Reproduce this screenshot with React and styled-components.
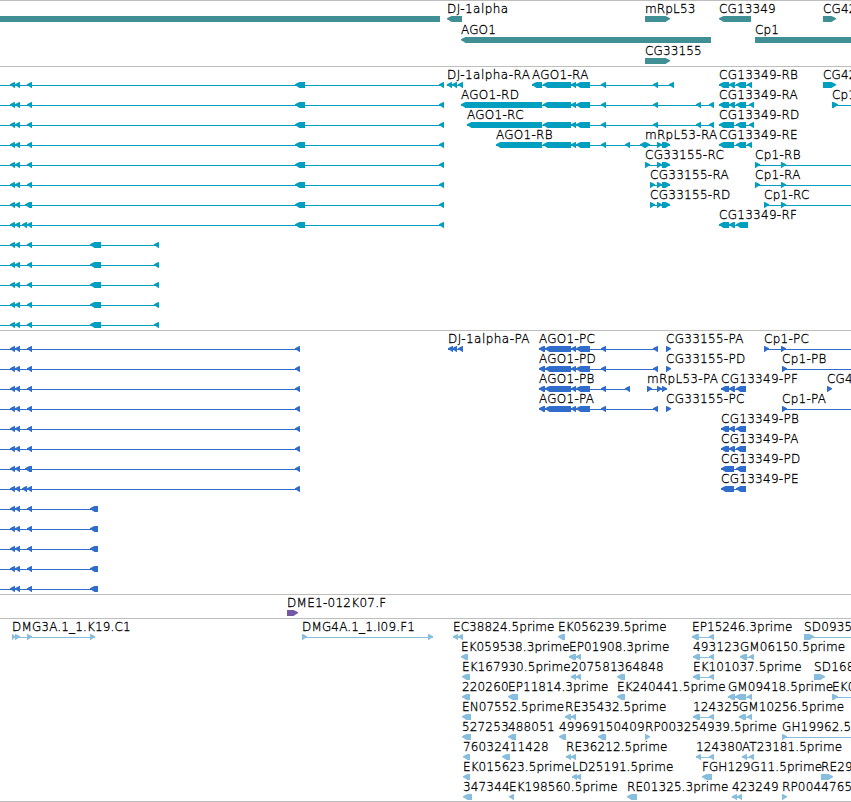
import React from 'react'
import styled, { createGlobalStyle } from 'styled-components'

const WIDTH = 851
const HEAD = 5
const BAR_TOP = 15
const BAR_HEIGHT = 6

// a feature is a label, a strand and its exons as [start, end]
// from / to extend the intron line past the first or last exon

const rev = (label, exons, from) => ({ label, strand: '<', exons, from })
const fwd = (label, exons, to) => ({ label, strand: '>', exons, to })

const longIsoform = (...middle) =>
    rev('', [[10, 15], [15, 20], ...middle, [295, 305], [439, 444]], 0)
const shortIsoform = () =>
    rev('', [[10, 15], [15, 20], [27, 32], [90, 101], [154, 159]], 0)
const longProtein = (...middle) =>
    rev('', [[10, 15], [15, 20], ...middle, [295, 300]], 0)
const shortProtein = () =>
    rev('', [[10, 15], [15, 20], [27, 32], [90, 98]], 0)

const ago = (label, start, ...tail) =>
    rev(label, [[start, 542], [543, 571], [571, 576], [576, 590], [601, 606], ...tail])
const agoProtein = (label, last) =>
    rev(label, [[539, 545], [545, 571], [571, 576], [576, 590], [601, 606], last])

const genes = [
    [
        { label: '', strand: '-', exons: [[0, 440]] },
        rev('DJ-1alpha', [[447, 462]]),
        fwd('mRpL53', [[645, 670]]),
        rev('CG13349', [[719, 751]]),
        fwd('CG42', [[823, 836]]),
    ],
    [rev('AGO1', [[461, 711]]), fwd('Cp1', [[755, 870]])],
    [fwd('CG33155', [[645, 670]])],
]

const transcripts = [
    [
        longIsoform([27, 32]),
        rev('DJ-1alpha-RA', [[447, 452], [452, 457], [458, 463]]),
        ago('AGO1-RA', 532, [653, 658], [669, 674]),
        rev('CG13349-RB', [[719, 729], [729, 735], [736, 746], [747, 752]]),
        fwd('CG42', [[823, 836]]),
    ],
    [
        longIsoform([27, 32]),
        ago('AGO1-RD', 461, [653, 658], [696, 701], [709, 714]),
        rev('CG13349-RA', [[719, 729], [729, 735], [736, 746], [749, 754]]),
        fwd('Cp1', [[832, 838]], WIDTH),
    ],
    [
        longIsoform([27, 32]),
        ago('AGO1-RC', 467, [653, 658], [696, 701], [709, 714]),
        rev('CG13349-RD', [[719, 734], [736, 746], [749, 754]]),
    ],
    [
        longIsoform([27, 32]),
        ago('AGO1-RB', 496, [625, 630], [640, 645]),
        fwd('mRpL53-RA', [[645, 650], [657, 662], [662, 670]]),
        rev('CG13349-RE', [[719, 734], [736, 746], [747, 752]]),
    ],
    [
        longIsoform([27, 32]),
        fwd('CG33155-RC', [[645, 650], [657, 662], [662, 670]]),
        fwd('Cp1-RB', [[755, 760], [781, 786]], WIDTH),
    ],
    [
        longIsoform([27, 32]),
        fwd('CG33155-RA', [[650, 655], [657, 662], [662, 670]]),
        fwd('Cp1-RA', [[755, 760], [781, 786]], WIDTH),
    ],
    [
        longIsoform([25, 32]),
        fwd('CG33155-RD', [[650, 655], [657, 662], [662, 670]]),
        fwd('Cp1-RC', [[764, 769], [781, 786]], WIDTH),
    ],
    [
        longIsoform([22, 27], [27, 32]),
        rev('CG13349-RF', [[719, 729], [729, 735], [736, 748]]),
    ],
    [shortIsoform()],
    [shortIsoform()],
    [shortIsoform()],
    [shortIsoform()],
    [shortIsoform()],
]

const proteins = [
    [
        longProtein([27, 32]),
        rev('DJ-1alpha-PA', [[448, 453], [452, 457], [458, 463]]),
        agoProtein('AGO1-PC', [653, 658]),
        fwd('CG33155-PA', [[666, 671]]),
        fwd('Cp1-PC', [[764, 769], [781, 786]], WIDTH),
    ],
    [
        longProtein([27, 32]),
        agoProtein('AGO1-PD', [653, 658]),
        fwd('CG33155-PD', [[666, 671]]),
        fwd('Cp1-PB', [[782, 787]], WIDTH),
    ],
    [
        longProtein([27, 32]),
        agoProtein('AGO1-PB', [625, 630]),
        fwd('mRpL53-PA', [[647, 652], [657, 662], [662, 667]]),
        rev('CG13349-PF', [[721, 729], [729, 735], [736, 746]]),
        fwd('CG4', [[827, 832]]),
    ],
    [
        longProtein([27, 32]),
        agoProtein('AGO1-PA', [653, 658]),
        fwd('CG33155-PC', [[666, 671]]),
        fwd('Cp1-PA', [[782, 787]], WIDTH),
    ],
    [longProtein([27, 32]), rev('CG13349-PB', [[721, 729], [729, 735], [736, 746]])],
    [longProtein([27, 32]), rev('CG13349-PA', [[721, 729], [729, 735], [736, 746]])],
    [longProtein([25, 32]), rev('CG13349-PD', [[721, 734], [736, 746]])],
    [longProtein([22, 27], [27, 32]), rev('CG13349-PE', [[721, 734], [736, 746]])],
    [shortProtein()],
    [shortProtein()],
    [shortProtein()],
    [shortProtein()],
    [shortProtein()],
]

const clones = [[fwd('DME1-012K07.F', [[287, 298]])]]

const ests = [
    [
        fwd('DMG3A.1_1.K19.C1', [[12, 15], [15, 20], [27, 32], [90, 95]]),
        fwd('DMG4A.1_1.I09.F1', [[302, 307], [428, 433]]),
        rev('EC38824.5prime', [[453, 458], [458, 463]]),
        rev('EK056239.5prime', [[558, 565]]),
        rev('EP15246.3prime', [[692, 699], [709, 714]]),
        fwd('SD0935', [[804, 814]], WIDTH),
    ],
    [
        rev('EK059538.3prime', [[461, 468]]),
        rev('EP01908.3prime', [[569, 576], [576, 581]]),
        rev('493123', [[693, 700], [709, 714]]),
        rev('GM06150.5prime', [[740, 747], [749, 754]]),
    ],
    [
        rev('EK167930.5prime', [[462, 470]]),
        rev('207581', [[571, 576], [576, 581]]),
        rev('364848', [[617, 625]]),
        rev('EK101037.5prime', [[693, 700], [709, 714]]),
        fwd('SD168', [[814, 825]]),
    ],
    [
        rev('220260', [[462, 470]]),
        rev('EP11814.3prime', [[508, 518]]),
        rev('EK240441.5prime', [[617, 625]]),
        rev('GM09418.5prime', [[728, 735], [735, 746], [747, 752]]),
        fwd('EK0', [[832, 838]], WIDTH),
    ],
    [
        rev('EN07552.5prime', [[462, 471]]),
        rev('RE35432.5prime', [[565, 571], [571, 576]]),
        rev('124325', [[693, 700], [709, 714]]),
        rev('GM10256.5prime', [[739, 746], [747, 752]]),
    ],
    [
        rev('527253', [[462, 471]]),
        rev('488051', [[508, 516]]),
        rev('49969', [[559, 566]]),
        rev('150409', [[598, 606]]),
        fwd('RP003254939.5prime', [[645, 650]]),
        fwd('GH19962.5', [[782, 787]], WIDTH),
    ],
    [
        rev('76032', [[463, 470]]),
        rev('411428', [[502, 510]]),
        rev('RE36212.5prime', [[566, 571], [571, 576]]),
        rev('124380', [[696, 701], [709, 714]]),
        rev('AT23181.5prime', [[742, 747], [749, 754]]),
    ],
    [
        rev('EK015623.5prime', [[463, 470]]),
        rev('LD25191.5prime', [[572, 577], [576, 581]]),
        rev('FGH129G11.5prime', [[702, 712]]),
        fwd('RE29', [[821, 833]]),
    ],
    [
        rev('347344', [[463, 472]]),
        rev('EK198560.5prime', [[509, 514]]),
        rev('RE01325.3prime', [[627, 637]]),
        rev('423249', [[732, 737], [737, 742]]),
        fwd('RP0044765', [[782, 787]]),
    ],
]

const tracks = [
    { name: 'genes', color: '#3f8f94', rowHeight: 21, gap: 2, rows: genes },
    { name: 'transcripts', color: '#009fc0', rowHeight: 20, gap: 3, rows: transcripts },
    { name: 'proteins', color: '#306ccc', rowHeight: 20, gap: 3, rows: proteins },
    { name: 'clones', color: '#7458a6', rowHeight: 20, gap: 3, rows: clones },
    { name: 'ests', color: '#87bddd', rowHeight: 20, gap: 2, rows: ests },
]

function exonPoints([start, end], strand) {
    const top = BAR_TOP
    const mid = BAR_TOP + BAR_HEIGHT / 2
    const bottom = BAR_TOP + BAR_HEIGHT
    if (strand === '-') {
        return `${start},${top} ${end},${top} ${end},${bottom} ${start},${bottom}`
    }
    const size = Math.min(HEAD, end - start)
    const tip = strand === '<' ? start : end
    const back = strand === '<' ? end : start
    const dir = strand === '<' ? 1 : -1
    const neck = tip + dir * (size - 0.5)
    const cheek = tip + dir * size * 0.45
    return [
        [tip, mid - 0.8],
        [cheek, top + 0.9],
        [neck, top],
        [back, top],
        [back, bottom],
        [neck, bottom],
        [cheek, bottom - 1.5],
        [tip, mid + 0.3],
    ].join(' ')
}

function Feature({ strand, exons, from, to }) {
    const start = from ?? exons[0][0]
    const end = to ?? exons[exons.length - 1][1]
    const hasIntrons = exons.length > 1 || to !== undefined

    return (
        <g>
            {hasIntrons && <rect x={start} y={BAR_TOP + 3} width={end - start} height="1" />}
            {exons.map((exon) => (
                <polygon key={exon[0]} points={exonPoints(exon, strand)} />
            ))}
        </g>
    )
}

function tracking(label) {
    if (label.startsWith('DJ')) return 0.45
    if (label.endsWith('prime')) return 0.07
    if (label.includes('-')) return 0.28
    return 0.15
}

function App() {
    return (
        <>
            <GlobalStyle />
            <Browser>
                {tracks.map((track) => (
                    <Track key={track.name} $gap={track.gap}>
                        {track.rows.map((row, i) => (
                            <Row key={i} $height={track.rowHeight}>
                                <Glyphs $color={track.color} $height={track.rowHeight + 1}>
                                    {row.map((feature, j) => (
                                        <Feature key={j} {...feature} />
                                    ))}
                                </Glyphs>
                                {row.filter((feature) => feature.label).map((feature) => (
                                    <Label
                                        key={feature.label}
                                        $tracking={tracking(feature.label)}
                                        style={{ left: feature.exons[0][0] }}
                                    >
                                        {feature.label}
                                    </Label>
                                ))}
                            </Row>
                        ))}
                    </Track>
                ))}
            </Browser>
        </>
    )
}

const GlobalStyle = createGlobalStyle`
    body {
        margin: 0;
        background: #fff;
    }
`

const Browser = styled.main`
    width: ${WIDTH}px;
    height: 802px;
    box-sizing: border-box;
    overflow: hidden;
    border-bottom: 1px solid #bebebe;
    font-family: 'DejaVu Sans', sans-serif;
    font-weight: 200;
    font-size: 12px;
    color: #000;
    -webkit-text-stroke: 0.3px #000;
`

const Track = styled.section`
    border-top: 1px solid #bebebe;
    padding-bottom: ${(props) => props.$gap}px;
`

const Row = styled.div`
    position: relative;
    height: ${(props) => props.$height}px;
`

const Glyphs = styled.svg`
    display: block;
    width: 100%;
    height: ${(props) => props.$height}px;
    fill: ${(props) => props.$color};
`

// labels start where their feature starts on the sequence
const Label = styled.span`
    position: absolute;
    top: 1px;
    line-height: 15px;
    letter-spacing: ${(props) => props.$tracking}px;
    white-space: nowrap;
`

export default App
